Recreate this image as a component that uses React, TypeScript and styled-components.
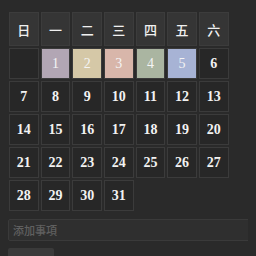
import React from "react";
import styled, { createGlobalStyle } from "styled-components";

const Global = createGlobalStyle`
  html, body { background: #2a2a2a; }
  body { margin: 8px; font-family: "Liberation Serif", serif; overflow: hidden; }
`;

const Wrap = styled.div`
  display: flex;
  flex-direction: column;
  align-items: flex-start;
  padding-top: 4px;
`;

const Grid = styled.div`
  display: grid;
  grid-template-columns: repeat(7, 29.67px);
  grid-auto-rows: 31px;
  grid-template-rows: 34px;
  column-gap: 2px;
  row-gap: 2px;
  margin-left: 1px;
`;

const Head = styled.div`
  box-sizing: border-box;
  display: flex;
  align-items: center;
  justify-content: center;
  background: #353535;
  border: 1px solid #3c3c3c;
  color: #f0f0f0;
  font-family: "Noto Sans CJK TC", "Noto Sans CJK SC", sans-serif;
  font-weight: 500;
  font-size: 13px;
`;

const Day = styled.div<{ $bg?: string }>`
  box-sizing: border-box;
  display: flex;
  align-items: center;
  justify-content: center;
  background: ${(p) => p.$bg || "#272727"};
  border: 1px solid #3b3b3b;
  color: ${(p) => (p.$bg ? "#f4f4f4" : "#f2f2f2")};
  font-family: "Liberation Serif", serif;
  font-weight: ${(p) => (p.$bg ? 400 : 700)};
  font-size: 14px;
`;

const Input = styled.input`
  box-sizing: border-box;
  margin-top: 8px;
  width: 270px;
  height: 22px;
  background: #2f2f2f;
  border: 1px solid #3a3a3a;
  border-radius: 2px;
  padding: 0 4px;
  color: #ddd;
  font-family: "Noto Sans CJK TC", sans-serif;
  font-weight: 500;
  font-size: 11px;
  outline: none;
  &::placeholder { color: #606060; }
`;

const Button = styled.div`
  margin-top: 7px;
  width: 46px;
  height: 24px;
  background: #3a3a3a;
  border-radius: 2px;
`;

const heads = ["日", "一", "二", "三", "四", "五", "六"];
const colors: Record<number, string> = {
  1: "#b2a6b4",
  2: "#d5c8a7",
  3: "#d8b6aa",
  4: "#aab5a1",
  5: "#a7b3d5",
};

export default function App() {
  const days = Array.from({ length: 31 }, (_, i) => i + 1);
  return (
    <>
      <Global />
      <Wrap>
        <Grid>
          {heads.map((h) => (
            <Head key={h}>{h}</Head>
          ))}
          <Day />
          {days.map((d) => (
            <Day key={d} $bg={colors[d]}>
              {d}
            </Day>
          ))}
        </Grid>
        <Input placeholder="添加事項" />
        <Button />
      </Wrap>
    </>
  );
}
